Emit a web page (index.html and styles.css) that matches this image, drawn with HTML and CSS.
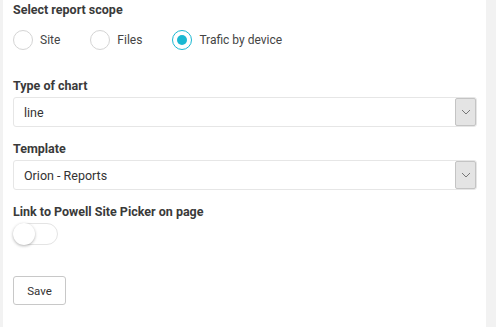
FILE: index.html
```html
<!DOCTYPE html>
<html lang="en">
<head>
    <meta charset="UTF-8">
    <meta name="viewport" content="width=device-width, initial-scale=1.0">
    <title>Report settings</title>
    <link rel="stylesheet" href="styles.css">
</head>
<body>

    <div class="panel">
        <div class="field">
            <div class="label">Select report scope</div>
            <div class="radios">
                <label class="radio"><span class="circle"></span>Site</label>
                <label class="radio"><span class="circle"></span>Files</label>
                <label class="radio checked"><span class="circle"></span>Trafic by device</label>
            </div>
        </div>

        <div class="field">
            <div class="label">Type of chart</div>
            <div class="select">
                <span class="value">line</span>
                <span class="arrow">
                    <svg width="10" height="6" viewBox="0 0 10 6"><path d="M1 1 L5 5 L9 1" fill="none" stroke="#777" stroke-width="1"/></svg>
                </span>
            </div>
        </div>

        <div class="field">
            <div class="label">Template</div>
            <div class="select">
                <span class="value">Orion - Reports</span>
                <span class="arrow">
                    <svg width="10" height="6" viewBox="0 0 10 6"><path d="M1 1 L5 5 L9 1" fill="none" stroke="#777" stroke-width="1"/></svg>
                </span>
            </div>
        </div>

        <div class="field">
            <div class="label">Link to Powell Site Picker on page</div>
            <div class="toggle"><span class="knob"></span></div>
        </div>

        <button class="save">Save</button>
    </div>

</body>
</html>
```

FILE: styles.css
```css
body {
    margin: 0;
    padding: 0;
    background-color: #f2f2f2;
    font-family: Roboto, "Liberation Sans", sans-serif;
    color: #333;
}

.panel {
    margin-left: 3px;
    width: 483px;
    height: 327px;
    box-sizing: border-box;
    background-color: #fff;
    padding: 2px 9px 0 10px;
}

.label {
    font-size: 12.5px;
    font-weight: bold;
    line-height: 16px;
    color: #3a3a3a;
}

.field {
    margin-bottom: 14px;
}

.radios {
    display: flex;
    margin-top: 12px;
    margin-bottom: 28px;
}

.radio {
    display: flex;
    align-items: center;
    font-size: 12px;
    color: #444;
    margin-right: 30px;
}

.circle {
    width: 18px;
    height: 18px;
    border: 1px solid #d4d4d4;
    border-radius: 50%;
    margin-right: 7px;
    display: flex;
    align-items: center;
    justify-content: center;
    box-sizing: content-box;
}

.radio.checked .circle {
    border-color: #1ab8d2;
}

.radio.checked .circle::after {
    content: "";
    width: 10px;
    height: 10px;
    border-radius: 50%;
    background-color: #1ab8d2;
}

.select {
    margin-top: 3px;
    height: 30px;
    border: 1px solid #e6e6e6;
    border-radius: 3px;
    display: flex;
    align-items: center;
    justify-content: space-between;
    box-sizing: border-box;
    font-size: 12.5px;
    color: #333;
}

.value {
    padding-left: 10px;
}

.arrow {
    width: 21px;
    height: 28px;
    background-color: #e4e4e4;
    border: 1px solid #c4c4c4;
    border-radius: 2px;
    display: flex;
    align-items: center;
    justify-content: center;
    box-sizing: border-box;
}

.toggle {
    margin-top: 3px;
    width: 45px;
    height: 22px;
    border: 1px solid #e4e4e4;
    border-radius: 11px;
    box-sizing: border-box;
    position: relative;
}

.knob {
    position: absolute;
    left: -1px;
    top: -1px;
    width: 22px;
    height: 22px;
    border-radius: 50%;
    background-color: #fff;
    box-shadow: 0 1px 3px rgba(0, 0, 0, 0.3);
}

.save {
    display: block;
    margin-top: 31px;
    width: 53px;
    height: 29px;
    background-color: #fff;
    border: 1px solid #c8c8c8;
    border-radius: 3px;
    font-family: Roboto, "Liberation Sans", sans-serif;
    font-size: 11.5px;
    color: #333;
    padding: 0;
}
```
